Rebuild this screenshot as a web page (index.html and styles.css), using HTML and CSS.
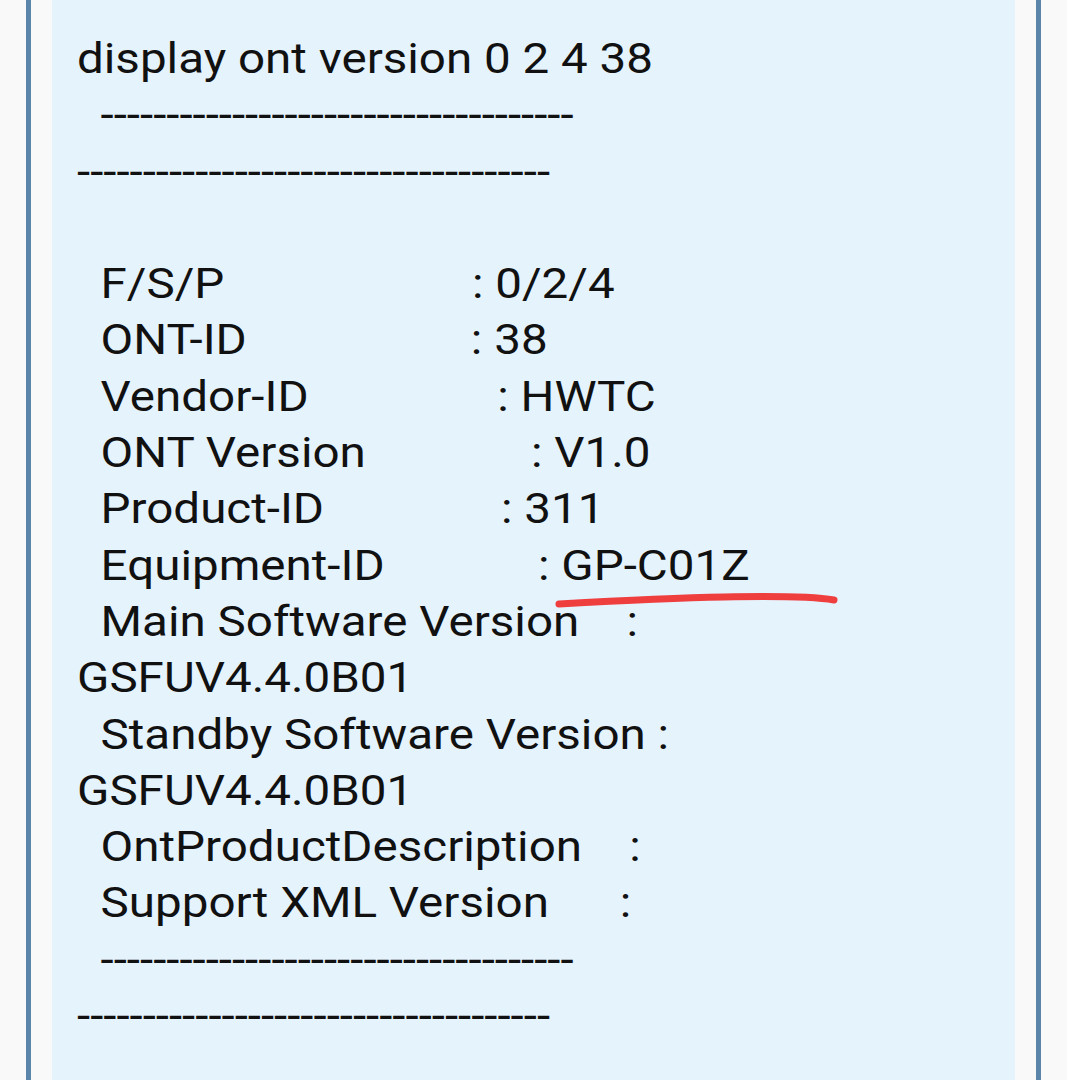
FILE: index.html
```html
<!DOCTYPE html>
<html>
<head>
<meta charset="utf-8">
<link rel="stylesheet" href="styles.css">
</head>
<body>
<div class="frame">
  <div class="card">
    <div class="text">
      <div class="ln">display ont version 0 2 4 38</div>
      <div class="ln">  ------------------------------------</div>
      <div class="ln">------------------------------------</div>
      <div class="ln"> </div>
      <div class="ln">  F/S/P                     : 0/2/4</div>
      <div class="ln">  ONT-ID                   : 38</div>
      <div class="ln">  Vendor-ID                : HWTC</div>
      <div class="ln">  ONT Version              : V1.0</div>
      <div class="ln">  Product-ID               : 311</div>
      <div class="ln">  Equipment-ID             : GP-C01Z</div>
      <div class="ln">  Main Software Version    :</div>
      <div class="ln">GSFUV4.4.0B01</div>
      <div class="ln">  Standby Software Version :</div>
      <div class="ln">GSFUV4.4.0B01</div>
      <div class="ln">  OntProductDescription    :</div>
      <div class="ln">  Support XML Version      :</div>
      <div class="ln">  ------------------------------------</div>
      <div class="ln">------------------------------------</div>
    </div>
    <svg class="mark" width="300" height="24" viewBox="0 0 300 24">
      <path d="M5 15 C 60 12, 120 9, 170 8 S 262 8, 280 11" fill="none" stroke="#ef3e3e" stroke-width="7" stroke-linecap="round"/>
    </svg>
  </div>
</div>
</body>
</html>
```
FILE: styles.css
```css
html, body {
  margin: 0;
  padding: 0;
  background: #f9f9f9;
}
.frame {
  margin-left: 26px;
  width: 1015px;
  height: 1080px;
  border-left: 5px solid #5b86aa;
  border-right: 5px solid #5b86aa;
  padding: 0 21px;
  box-sizing: border-box;
  overflow: hidden;
}
.card {
  position: relative;
  height: 100%;
  background: #e5f3fd;
  padding: 31px 0 0 25px;
  box-sizing: border-box;
  font-family: Roboto, "Noto Sans", sans-serif;
  font-size: 42px;
  line-height: 56.3px;
  color: #111;
}
.text {
  transform: scaleX(1.132);
  transform-origin: 0 0;
}
.ln {
  white-space: pre;
  height: 56.3px;
}
.mark {
  position: absolute;
  left: 502px;
  top: 589px;
}
```
